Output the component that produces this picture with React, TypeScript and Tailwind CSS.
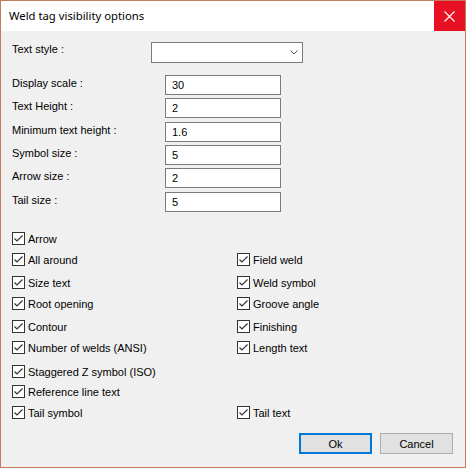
import React from "react";

const body = { fontFamily: '"Liberation Sans", Arial, sans-serif' };
const title = { fontFamily: '"Segoe UI", "Noto Sans", "Open Sans", sans-serif' };

const Check = ({ label }: { label: string }) => (
  <div className="flex items-center h-[13px]">
    <div className="w-[13px] h-[13px] border border-[#333333] bg-white flex items-center justify-center shrink-0">
      <svg width="11" height="11" viewBox="0 0 11 11">
        <path d="M1.5 5.5 L4 8 L9.5 2.5" fill="none" stroke="#333333" strokeWidth="1.2" />
      </svg>
    </div>
    <span className="ml-[3px] text-[11px] leading-[16px] text-black whitespace-nowrap">{label}</span>
  </div>
);

const Field = ({ label, value, mt }: { label: string; value: string; mt: string }) => (
  <div className={`flex items-start ${mt}`}>
    <div className="w-[153px] text-[11px] leading-[16px] text-black">{label}</div>
    <div className="w-[116px] h-[20px] border border-[#7a7a7a] bg-white pl-[6px] text-[11px] leading-[19px] text-black">
      {value}
    </div>
  </div>
);

const rows: { left?: string; right?: string; mt: string }[] = [
  { left: "Arrow", mt: "mt-[20px]" },
  { left: "All around", right: "Field weld", mt: "mt-[8px]" },
  { left: "Size text", right: "Weld symbol", mt: "mt-[10px]" },
  { left: "Root opening", right: "Groove angle", mt: "mt-[8px]" },
  { left: "Contour", right: "Finishing", mt: "mt-[10px]" },
  { left: "Number of welds (ANSI)", right: "Length text", mt: "mt-[8px]" },
  { left: "Staggered Z symbol (ISO)", mt: "mt-[11px]" },
  { left: "Reference line text", mt: "mt-[7px]" },
  { left: "Tail symbol", right: "Tail text", mt: "mt-[8px]" },
];

export default function App() {
  return (
    <div className="w-[466px] h-[468px] border border-[#c27b5c] flex flex-col overflow-hidden" style={body}>
      {/* title bar */}
      <div className="h-[30px] bg-white flex items-center shrink-0">
        <div className="flex-1 pl-[8px] text-[11.3px] text-black" style={title}>
          Weld tag visibility options
        </div>
        <div className="w-[31px] h-[30px] bg-[#e81123] flex items-center justify-center">
          <svg width="11" height="11" viewBox="0 0 11 11">
            <path d="M0.5 0.5 L10.5 10.5 M10.5 0.5 L0.5 10.5" stroke="white" strokeWidth="1.1" />
          </svg>
        </div>
      </div>

      <div className="flex-1 bg-[#f0f0f0] pl-[11px] pt-[10px]">
        <div className="flex items-start">
          <div className="w-[139px] text-[11px] leading-[16px] text-black">Text style :</div>
          <div className="mt-[1px] w-[152px] h-[21px] border border-[#7a7a7a] bg-white flex items-center justify-end pr-[4px]">
            <svg width="8" height="5" viewBox="0 0 8 5">
              <path d="M0.5 0.5 L4 4 L7.5 0.5" fill="none" stroke="#555555" strokeWidth="1" />
            </svg>
          </div>
        </div>

        <Field label="Display scale :" value="30" mt="mt-[12px]" />
        <Field label="Text Height :" value="2" mt="mt-[3px]" />
        <Field label="Minimum text height :" value="1.6" mt="mt-[4px]" />
        <Field label="Symbol size :" value="5" mt="mt-[3px]" />
        <Field label="Arrow size :" value="2" mt="mt-[3px]" />
        <Field label="Tail size :" value="5" mt="mt-[4px]" />

        {rows.map((r, i) => (
          <div key={i} className={`flex ${r.mt}`}>
            <div className="w-[225px]">{r.left && <Check label={r.left} />}</div>
            <div>{r.right && <Check label={r.right} />}</div>
          </div>
        ))}

        <div className="flex justify-end gap-[8px] pr-[12px] mt-[14px]">
          <button className="w-[73px] h-[21px] border-2 border-[#0078d7] bg-[#e1e1e1] text-[11px] leading-[16px] text-black">
            Ok
          </button>
          <button className="w-[73px] h-[21px] border border-[#adadad] bg-[#e1e1e1] text-[11px] leading-[16px] text-black">
            Cancel
          </button>
        </div>
      </div>
    </div>
  );
}
